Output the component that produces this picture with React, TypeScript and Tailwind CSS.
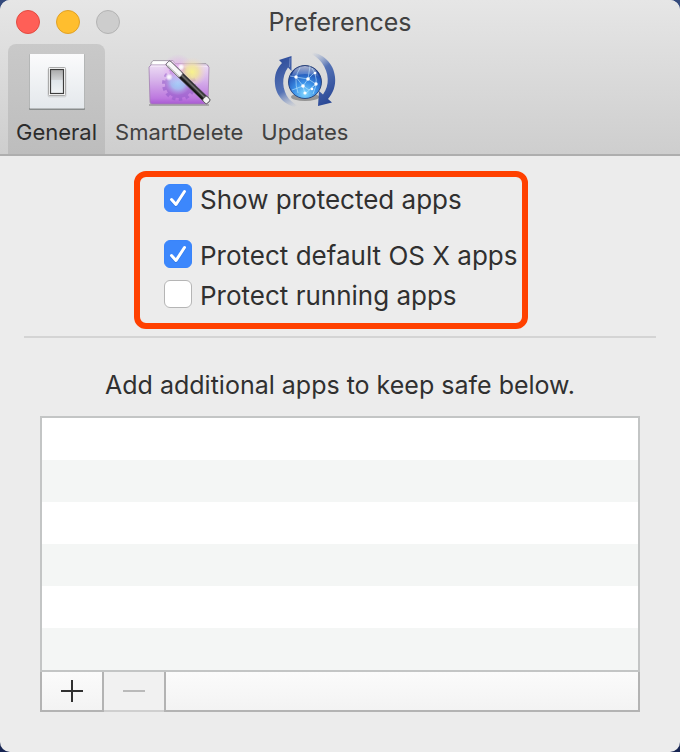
import { useState } from "react";
import type { ReactNode } from "react";

function SwitchIcon() {
  return (
    <svg width="64" height="64" viewBox="0 0 64 64" aria-hidden="true">
      <defs>
        <linearGradient id="plate" x1="0" y1="0" x2="0" y2="1">
          <stop offset="0" stopColor="#fbfbfc" />
          <stop offset="1" stopColor="#e4e8ec" />
        </linearGradient>
        <linearGradient id="rocker" x1="0" y1="0" x2="0" y2="1">
          <stop offset="0" stopColor="#a9a9a9" />
          <stop offset="0.42" stopColor="#d0d2d4" />
          <stop offset="0.46" stopColor="#dfe5ea" />
          <stop offset="1" stopColor="#f0f3f5" />
        </linearGradient>
      </defs>
      <rect x="4" y="6" width="56" height="56" rx="1" fill="#b4b6b6" />
      <rect x="4" y="60" width="56" height="2" rx="1" fill="#898c8c" />
      <rect x="5" y="6" width="54" height="54.5" fill="url(#plate)" />
      <rect x="22.5" y="20" width="19" height="29.5" rx="2" fill="#000" opacity="0.1" />
      <rect x="23.5" y="19.5" width="17" height="28" rx="1" fill="#fff" stroke="#aaa" />
      <rect x="25.5" y="21.5" width="13" height="24" fill="url(#rocker)" stroke="#3d3d3d" strokeWidth="1.2" />
    </svg>
  );
}

function FolderWandIcon() {
  return (
    <svg width="64" height="64" viewBox="0 0 64 64" aria-hidden="true">
      <defs>
        <linearGradient id="folder" x1="0" y1="0" x2="0" y2="1">
          <stop offset="0" stopColor="#ecdcf4" />
          <stop offset="0.4" stopColor="#d6b1ea" />
          <stop offset="0.85" stopColor="#bd78df" />
          <stop offset="1" stopColor="#a95bd3" />
        </linearGradient>
        <radialGradient id="glowPink">
          <stop offset="0" stopColor="#e9a6ee" stopOpacity="0.9" />
          <stop offset="1" stopColor="#e0a4ee" stopOpacity="0" />
        </radialGradient>
        <radialGradient id="glowYellow">
          <stop offset="0" stopColor="#f8f38b" />
          <stop offset="0.4" stopColor="#f1e59c" stopOpacity="0.85" />
          <stop offset="1" stopColor="#efd5cf" stopOpacity="0" />
        </radialGradient>
        <radialGradient id="glowBlue">
          <stop offset="0" stopColor="#9ed6fb" />
          <stop offset="0.55" stopColor="#a7bff2" stopOpacity="0.9" />
          <stop offset="1" stopColor="#bd99e6" stopOpacity="0.1" />
        </radialGradient>
        <radialGradient id="spark">
          <stop offset="0" stopColor="#fff" />
          <stop offset="0.45" stopColor="#fff" stopOpacity="0.75" />
          <stop offset="1" stopColor="#fff" stopOpacity="0" />
        </radialGradient>
        <linearGradient id="wand" x1="0" y1="0" x2="0" y2="1">
          <stop offset="0" stopColor="#111" />
          <stop offset="0.4" stopColor="#777" />
          <stop offset="0.65" stopColor="#222" />
          <stop offset="1" stopColor="#050505" />
        </linearGradient>
      </defs>
      <path d="M2 57h60" stroke="#555" strokeWidth="2" opacity="0.35" />
      <path d="M4 20v-5l2-2.5h20l2 3h31l2 2v5Z" fill="#f5f5f5" stroke="#9b939f" strokeWidth="0.8" />
      <path d="M6 15h18" stroke="#fff" strokeWidth="2" />
      <path d="M2 19l2-2h56l2 2-1 35q0 2-2 2H5q-2 0-2-2Z" fill="url(#folder)" stroke="#a282b0" strokeWidth="0.8" />
      <path d="M4 18h56" stroke="#f9f1fc" />
      <g opacity="0.55">
        <circle cx="32" cy="36" r="14" fill="#9058c8" />
        <circle cx="32" cy="36" r="15" fill="none" stroke="#9058c8" strokeWidth="4" strokeDasharray="3.4 3.33" />
      </g>
      <circle cx="31" cy="34" r="13" fill="url(#glowBlue)" />
      <circle cx="31" cy="22" r="16" fill="url(#glowPink)" />
      <circle cx="45" cy="24" r="15" fill="url(#glowYellow)" />
      <circle cx="22" cy="29" r="4" fill="url(#spark)" />
      <circle cx="34" cy="19" r="3.5" fill="url(#spark)" />
      <circle cx="27" cy="22" r="2.5" fill="url(#spark)" opacity="0.7" />
      <g transform="translate(20.5 14.5) rotate(44)">
        <rect x="0" y="-3" width="57" height="6" rx="2" fill="url(#wand)" stroke="#55505a" strokeWidth="0.8" />
        <rect x="0" y="-3" width="19" height="6" rx="2" fill="#f8f8f8" stroke="#77717a" strokeWidth="0.8" />
        <path d="M2 2h16" stroke="#bbb" strokeWidth="1" />
        <rect x="51" y="-3" width="6" height="6" rx="1.5" fill="#f3f3f3" stroke="#555" strokeWidth="0.8" />
      </g>
    </svg>
  );
}

function GlobeUpdateIcon() {
  return (
    <svg width="64" height="64" viewBox="0 0 64 64" aria-hidden="true">
      <defs>
        <radialGradient id="globe" cx="0.5" cy="0.85" r="0.85">
          <stop offset="0" stopColor="#83d8ff" />
          <stop offset="0.4" stopColor="#3b91e8" />
          <stop offset="0.75" stopColor="#2457b8" />
          <stop offset="1" stopColor="#142b79" />
        </radialGradient>
        <linearGradient id="gloss" x1="0" y1="0" x2="0" y2="1">
          <stop offset="0" stopColor="#fff" stopOpacity="0.65" />
          <stop offset="1" stopColor="#fff" stopOpacity="0.05" />
        </linearGradient>
        <linearGradient id="leftArc" x1="0.4" y1="0" x2="0.7" y2="1">
          <stop offset="0" stopColor="#314f9c" />
          <stop offset="0.6" stopColor="#5472b5" />
          <stop offset="1" stopColor="#91a5cf" stopOpacity="0" />
        </linearGradient>
        <linearGradient id="rightArc" x1="0.2" y1="0" x2="0.6" y2="1">
          <stop offset="0" stopColor="#91a5cf" stopOpacity="0" />
          <stop offset="0.4" stopColor="#5472b5" />
          <stop offset="1" stopColor="#2a4896" />
        </linearGradient>
      </defs>
      <path d="M6 12L18.500 8L18.500 23L15 19.500C8 29 9 42 16 51C20 55 24 58 29 60C14 60 3 49 2 36C1 27 4 20 9 15Z" fill="url(#leftArc)" />
      <path d="M35 4C50 4 61 16 62 29C63 38 60 45 55 51L59 54.500L45 58L46 43L50 46.500C57 37 56 25 49 15C45 10 41 7 35 4Z" fill="url(#rightArc)" />
      <path d="M17 10l-.5 9" stroke="#7f97cd" strokeWidth="0.8" />
      <ellipse cx="32" cy="49" rx="14" ry="4" fill="#333" opacity="0.4" />
      <circle cx="32" cy="34" r="16.500" fill="url(#globe)" stroke="#17346f" strokeWidth="0.8" />
      <path d="M18 29q3-11 14-11t14 11q-14-6-28 0Z" fill="url(#gloss)" />
      <g fill="none" stroke="#c6edff" strokeWidth="0.7" opacity="0.8">
        <path d="M17 28l6 1 12 2 7-7M23 29l7 9 5-7 8 5-7 6-6-4-11 4M35 31l2-13M30 38l2 8 11-10M27 20q-7 10-2 25M39 20q8 11 1 26" />
      </g>
      <g fill="#fff">
        <circle cx="23" cy="29" r="1.700" />
        <circle cx="35" cy="31" r="1.800" />
        <circle cx="30" cy="38" r="1.800" />
        <circle cx="43" cy="36" r="1.700" />
        <circle cx="42" cy="25" r="1.300" />
        <circle cx="32" cy="45" r="1.600" />
        <circle cx="39" cy="41" r="1.300" />
      </g>
    </svg>
  );
}

function ToolbarTab({ label, icon, selected, onSelect }: { label: string; icon: ReactNode; selected: boolean; onSelect: () => void }) {
  return (
    <button
      type="button"
      aria-pressed={selected}
      onClick={onSelect}
      className={`flex h-[110px] flex-col items-center rounded-t-lg px-2 pt-1 text-[22px] leading-8 ${selected ? "bg-linear-to-b from-[#c9c9c9] to-[#bdbdbd] text-[#2c2c2c]" : "text-[#414141]"}`}
    >
      {icon}
      <span className="mt-1">{label}</span>
    </button>
  );
}

function CheckRow({ label, initial, className = "" }: { label: string; initial: boolean; className?: string }) {
  const [checked, setChecked] = useState(initial);
  return (
    <label className={`flex h-8 items-start gap-2 text-[26px] leading-8 whitespace-nowrap ${className}`}>
      <span className="grid size-7 shrink-0">
        <input
          type="checkbox"
          checked={checked}
          onChange={(e) => setChecked(e.target.checked)}
          className="col-start-1 row-start-1 size-7 appearance-none rounded-md border border-[#b5b5b5] bg-white checked:border-[#3984fb] checked:bg-[#3c87fc]"
        />
        {checked && (
          <svg className="pointer-events-none col-start-1 row-start-1" width="28" height="28" viewBox="0 0 28 28" aria-hidden="true">
            <path d="M7.500 15.500L12 20.500L20.500 7.500" transform="translate(0 1)" fill="none" stroke="#2469cf" strokeWidth="3" strokeLinecap="round" strokeLinejoin="round" opacity="0.5" />
            <path d="M7.500 15.500L12 20.500L20.500 7.500" fill="none" stroke="#fff" strokeWidth="3" strokeLinecap="round" strokeLinejoin="round" />
          </svg>
        )}
      </span>
      <span>{label}</span>
    </label>
  );
}

export default function App() {
  const [tab, setTab] = useState("General");
  const tabs = [
    { label: "General", icon: <SwitchIcon /> },
    { label: "SmartDelete", icon: <FolderWandIcon /> },
    { label: "Updates", icon: <GlobeUpdateIcon /> },
  ];
  return (
    <div className="bg-linear-to-b from-[#344a7c] to-[#172552] font-['Inter','Liberation_Sans',sans-serif] text-[25px] text-[#303030]">
      <main className="overflow-hidden rounded-[10px] bg-[#ececec] pb-10">
        <header className="border-b-2 border-[#aeaeae] bg-linear-to-b from-[#e6e6e6] to-[#cecece]">
          <div className="grid h-11 grid-cols-[1fr_auto_1fr] items-center px-4">
            <div className="flex gap-4">
              <button type="button" aria-label="Close" className="size-6 rounded-full border border-[#e24b41] bg-[#ff5f57]" />
              <button type="button" aria-label="Minimize" className="size-6 rounded-full border border-[#e0a126] bg-[#ffbe2e]" />
              <button type="button" aria-label="Zoom" disabled className="size-6 rounded-full border border-[#b3b3b3] bg-[#cdcdcd]" />
            </div>
            <h1 className="leading-8 text-[#414141]">Preferences</h1>
          </div>
          <nav className="flex gap-0.5 px-2" aria-label="Preference sections">
            {tabs.map((t) => (
              <ToolbarTab key={t.label} label={t.label} icon={t.icon} selected={tab === t.label} onSelect={() => setTab(t.label)} />
            ))}
          </nav>
        </header>

        <section className="mt-[15px] ml-[134px] w-[394px] rounded-xl border-6 border-[#ff4000] pt-[7px] pb-[11px] pl-6">
          <CheckRow label="Show protected apps" initial />
          <CheckRow label="Protect default OS X apps" initial className="mt-6" />
          <CheckRow label="Protect running apps" initial={false} className="mt-2" />
        </section>

        <hr className="mx-6 mt-[7px] border-t-2 border-[#d4d4d4]" />

        <p className="mt-[31px] text-center leading-8">Add additional apps to keep safe below.</p>

        <section className="mx-10 mt-[15px]" aria-label="Protected apps">
          <ul className="border-2 border-[#c3c5c5] bg-white">
            {[0, 1, 2, 3, 4, 5].map((row) => (
              <li key={row} className="h-[42px] even:bg-[#f4f6f5]" />
            ))}
          </ul>
          <div className="flex h-10">
            <button type="button" aria-label="Add app" className="flex w-16 items-center justify-center border-x-2 border-b-2 border-[#b3b3b3] bg-linear-to-b from-[#fbfbfb] to-[#f3f3f3]">
              <svg width="22" height="22" viewBox="0 0 22 22" aria-hidden="true">
                <path d="M0 11h22M11 0v22" stroke="#303030" strokeWidth="2" />
              </svg>
            </button>
            <button type="button" aria-label="Remove app" disabled className="flex w-15 items-center justify-center border-b-2 border-[#cfcfcf] bg-[#f1f1f1]">
              <svg width="22" height="22" viewBox="0 0 22 22" aria-hidden="true">
                <path d="M0 11h22" stroke="#bababa" strokeWidth="2" />
              </svg>
            </button>
            <div className="flex-1 border-x-2 border-b-2 border-[#b3b3b3] bg-linear-to-b from-[#fbfbfb] to-[#f3f3f3]" />
          </div>
        </section>
      </main>
    </div>
  );
}
